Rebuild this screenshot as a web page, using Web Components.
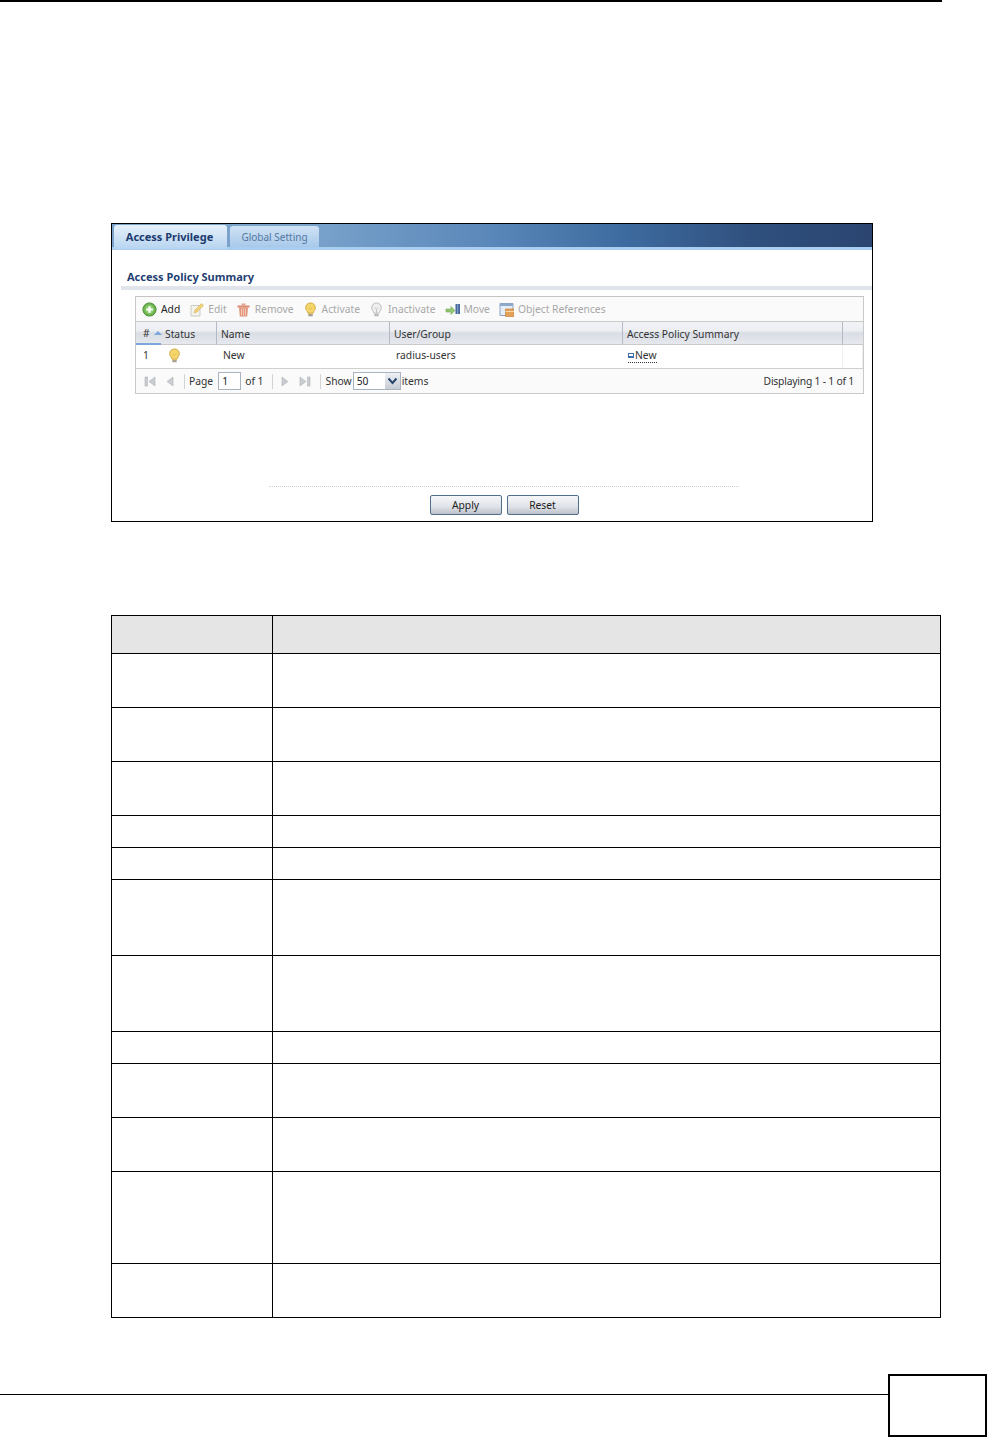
<!DOCTYPE html>
<html>
<head>
<meta charset="utf-8">
<title>Access Privilege</title>
<style>
    html, body { margin: 0; padding: 0; background: #fff; }
</style>
</head>
<body>
<zy-page>
    <zy-window>
        <zy-toolbar>
            <zy-tool icon="add" label="Add" active></zy-tool>
            <zy-tool icon="edit" label="Edit"></zy-tool>
            <zy-tool icon="remove" label="Remove"></zy-tool>
            <zy-tool icon="bulb" label="Activate"></zy-tool>
            <zy-tool icon="bulb-off" label="Inactivate"></zy-tool>
            <zy-tool icon="move" label="Move"></zy-tool>
            <zy-tool icon="refs" label="Object References"></zy-tool>
        </zy-toolbar>
        <zy-summary></zy-summary>
        <zy-pager></zy-pager>
    </zy-window>
    <zy-doc-table rows="54 54 54 32 32 76 76 32 54 54 92 54"></zy-doc-table>
</zy-page>

<script>
const ICONS = {
    add: `<circle cx="7.5" cy="7.5" r="6.6" fill="#6fb650" stroke="#4b8f3c"/><circle cx="7.5" cy="7.5" r="4.2" fill="#8fcf74"/><path d="M7.5 4.2v6.6M4.2 7.5h6.6" stroke="#fff" stroke-width="2.2"/>`,
    edit: `<path d="M2 3.5h9v10.5H2z" fill="#f4f4ee" stroke="#c9c9c2"/><path d="M5 11l1-3 6.5-6.5 2 2L8 10z" fill="#efd27a" stroke="#d8b868" stroke-width=".7"/>`,
    remove: `<path d="M1.5 3.5h12v2h-12z" fill="#d9876c"/><path d="M5.5 1.5h4v2h-4z" fill="#e0a48f"/><path d="M3 5.5h9l-.8 9H3.8z" fill="#e2947a"/><path d="M5.5 6.5v7M7.5 6.5v7M9.5 6.5v7" stroke="#f4c9b8"/>`,
    bulb: `<path d="M7.5 1C4.7 1 2.7 3 2.7 5.6c0 2.4 1.8 3.4 2.3 5.6h5c.5-2.2 2.3-3.2 2.3-5.6C12.3 3 10.3 1 7.5 1z" fill="#f5d66c" stroke="#d2a93f"/><path d="M5.8 5.500l1.700 2 1.700-2" fill="none" stroke="#e6b94e"/><path d="M5.300 12h4.400v2.300H5.300z" fill="#a8a28c"/>`,
    'bulb-off': `<path d="M7.500 1C4.700 1 2.700 3 2.700 5.600c0 2.400 1.800 3.400 2.300 5.600h5c.5-2.200 2.300-3.200 2.300-5.600C12.300 3 10.300 1 7.500 1z" fill="#efefef" stroke="#bdbdbd"/><path d="M5.800 5.500l1.700 2 1.700-2M7.500 7.500v3.500" fill="none" stroke="#c4c4c4"/><path d="M5.300 12h4.400v2.300H5.300z" fill="#bcbcbc"/>`,
    move: `<path d="M1 7h5V4.500L10 8.500l-4 4V10H1z" fill="#92c66f" stroke="#74a858" stroke-width=".6"/><path d="M10.500 2h4.500v10h-4.500z" fill="#44679c"/><path d="M12.700 2v10" stroke="#8ba8cf"/>`,
    refs: `<path d="M1 1.500h13v12H1z" fill="#e6edf6" stroke="#8ea4c4"/><path d="M1 1.500h13v2.500H1z" fill="#8ea8cc"/><path d="M6.500 7h8.500v7.500H6.500z" fill="#e4a15a" stroke="#c4823e" stroke-width=".7"/><path d="M6.500 9.500h8.500" stroke="#f6d6ae"/>`
};

class ZyPage extends HTMLElement {
    connectedCallback() {
        this.attachShadow({ mode: 'open' }).innerHTML = `
            <style>
                :host {
                    display: block;
                    width: 987px;
                    height: 1438px;
                    overflow: hidden;
                    font-family: "Noto Sans", sans-serif;
                }
                .top-rule { height: 2px; width: 942px; background: #000; }
                .content { padding: 221px 0 0 111px; }
                .footer { display: flex; align-items: flex-start; margin-top: 56px; }
                .footer-rule { width: 888px; height: 1px; margin-top: 20px; background: #000; }
                .page-box {
                    width: 95px;
                    height: 59px;
                    border: 2px solid #000;
                    background: #fff;
                }
            </style>
            <div class="top-rule"></div>
            <div class="content"><slot></slot></div>
            <div class="footer">
                <div class="footer-rule"></div>
                <div class="page-box"></div>
            </div>
        `;
    }
}

class ZyWindow extends HTMLElement {
    connectedCallback() {
        this.attachShadow({ mode: 'open' }).innerHTML = `
            <style>
                :host {
                    display: block;
                    box-sizing: border-box;
                    width: 762px;
                    height: 299px;
                    border: 1px solid #000;
                    background: #fff;
                    font-size: 10.3px;
                    color: #333;
                }
                .tabbar {
                    display: flex;
                    align-items: flex-end;
                    gap: 3px;
                    box-sizing: border-box;
                    height: 26px;
                    padding-left: 2px;
                    background: linear-gradient(90deg, #7ba3cc 0, #7ba3cc 25%, #5a87b9 50%, #3d6a9e 68%, #2f4f7d 85%, #2b4570 100%);
                    border-bottom: 3px solid #a9cdee;
                }
                .tab {
                    display: flex;
                    align-items: center;
                    justify-content: center;
                    box-sizing: border-box;
                    border-radius: 3px 3px 0 0;
                }
                .tab.on {
                    width: 113px;
                    height: 24px;
                    margin-bottom: -2px;
                    padding: 0 2px 2px 0;
                    background: linear-gradient(#e6f1fb, #b7d4f0);
                    color: #1c3a6e;
                    font-size: 11px;
                    font-weight: 700;
                }
                .tab.off {
                    width: 89px;
                    height: 21px;
                    background: linear-gradient(#cfe2f5, #a9c9ea);
                    color: #54779f;
                    font-size: 10px;
                }
                h2 {
                    margin: 0;
                    padding: 19px 0 0 15px;
                    height: 16px;
                    font-size: 11px;
                    line-height: 16px;
                    font-weight: 700;
                    color: #1f3f73;
                }
                .heading-bar { height: 4px; margin: 1px 0 0 9px; background: #e2e4ec; }
                .panel {
                    box-sizing: border-box;
                    width: 729px;
                    height: 98px;
                    margin: 6px 0 0 23px;
                    border: 1px solid #c9c9c9;
                    border-top-color: #c4c4c4;
                }
                .actions {
                    display: flex;
                    flex-direction: column;
                    align-items: center;
                    margin: 92px 0 0 24px;
                }
                .divider { width: 470px; border-top: 1px dotted #cfcfcf; }
                .buttons { display: flex; gap: 5px; margin-top: 8px; }
                button {
                    box-sizing: border-box;
                    width: 72px;
                    height: 20px;
                    padding: 0;
                    border: 1px solid #4f6f8c;
                    border-radius: 2px;
                    background: linear-gradient(#f6f7f9, #dfe2e8 60%, #bcc1c9);
                    font: inherit;
                    color: #222;
                }
            </style>
            <div class="tabbar">
                <div class="tab on">Access Privilege</div>
                <div class="tab off">Global Setting</div>
            </div>
            <h2>Access Policy Summary</h2>
            <div class="heading-bar"></div>
            <div class="panel"><slot></slot></div>
            <div class="actions">
                <div class="divider"></div>
                <div class="buttons">
                    <button>Apply</button>
                    <button>Reset</button>
                </div>
            </div>
        `;
    }
}

class ZyToolbar extends HTMLElement {
    connectedCallback() {
        this.attachShadow({ mode: 'open' }).innerHTML = `
            <style>
                :host {
                    display: flex;
                    align-items: center;
                    gap: 9px;
                    box-sizing: border-box;
                    height: 25px;
                    padding-left: 6px;
                    background: #fafafa;
                    border-bottom: 1px solid #c9c9c9;
                }
            </style>
            <slot></slot>
        `;
    }
}

class ZyTool extends HTMLElement {
    connectedCallback() {
        const name = this.getAttribute('icon');
        this.attachShadow({ mode: 'open' }).innerHTML = `
            <style>
                :host {
                    display: flex;
                    align-items: center;
                    gap: 4px;
                    color: #a8a8a8;
                    white-space: nowrap;
                }
                :host([active]) { color: #222; }
                svg { display: block; }
            </style>
            <svg width="15" height="15" viewBox="0 0 15 15">${ICONS[name]}</svg>
            <span>${this.getAttribute('label')}</span>
        `;
    }
}

class ZySummary extends HTMLElement {
    connectedCallback() {
        const cols = '25px 56px 173px 233px 220px 1fr';
        this.attachShadow({ mode: 'open' }).innerHTML = `
            <style>
                :host { display: block; }
                .head, .row { display: grid; grid-template-columns: ${cols}; box-sizing: border-box; }
                .head {
                    height: 23px;
                    background: linear-gradient(#f2f3f6 0, #eceef2 40%, #d9dde4 50%, #e6e8ed 100%);
                    border-bottom: 1px solid #c9c9c9;
                }
                .head div {
                    display: flex;
                    align-items: center;
                    gap: 4px;
                    padding: 1px 0 0 4px;
                    border-right: 1px solid #b4bbc6;
                    color: #333;
                }
                .head div:first-child {
                    padding-left: 7px;
                    border-right: 0;
                    border-bottom: 2px solid #7da7dc;
                    margin-bottom: -1px;
                }
                .head div:last-child { border-right: 0; }
                .sort {
                    width: 0;
                    height: 0;
                    border: 4px solid transparent;
                    border-top: 0;
                    border-bottom: 4px solid #7da7dc;
                }
                .row {
                    border-bottom: 1px solid #d0d0d0;
                    height: 24px;
                    background: #fff;
                }
                .row div {
                    display: flex;
                    align-items: center;
                    padding: 0 0 3px 5px;
                    border-right: 1px solid #eef0f3;
                    color: #333;
                }
                .row div:first-child { padding-left: 7px; border-right: 0; }
                .row div:nth-child(2) { padding-left: 6px; border-right: 0; }
                .row div:nth-child(3) { padding-left: 6px; border-right: 0; }
                .row div:nth-child(4) { border-right: 0; padding-left: 6px; }
                .link { display: flex; align-items: center; gap: 1px; border-bottom: 1px dotted #334; line-height: 13px; margin-top: 2px; }
                .link i { display: block; width: 4px; height: 2px; border: 1px solid #3f6fae; border-bottom-width: 2px; }
            </style>
            <div class="head">
                <div>#<span class="sort"></span></div>
                <div>Status</div>
                <div>Name</div>
                <div>User/Group</div>
                <div>Access Policy Summary</div>
                <div></div>
            </div>
            <div class="row">
                <div>1</div>
                <div><svg width="15" height="15" viewBox="0 0 15 15">${ICONS.bulb}</svg></div>
                <div>New</div>
                <div>radius-users</div>
                <div><span class="link"><i></i>New</span></div>
                <div></div>
            </div>
        `;
    }
}

class ZyPager extends HTMLElement {
    connectedCallback() {
        const arrow = (d) => `<svg width="13" height="13" viewBox="0 0 13 13"><path d="${d}" fill="#c9cdd2" stroke="#b0b4ba" stroke-width=".6"/></svg>`;
        this.attachShadow({ mode: 'open' }).innerHTML = `
            <style>
                :host {
                    display: flex;
                    align-items: center;
                    box-sizing: border-box;
                    height: 24px;
                    padding: 0 9px 0 8px;
                    background: #fafafa;
                    color: #333;
                }
                svg { display: block; }
                .sep { width: 1px; height: 15px; background: #d4d4d4; }
                .box {
                    box-sizing: border-box;
                    height: 18px;
                    padding-left: 3px;
                    border: 1px solid #a9b4c0;
                    background: #fff;
                    line-height: 16px;
                    color: #222;
                }
                .select { display: flex; width: 48px; padding: 0; }
                .select span { flex: 1; padding-left: 3px; }
                .select i {
                    display: flex;
                    align-items: center;
                    justify-content: center;
                    width: 15px;
                    background: linear-gradient(#eef0f3, #c6ccd4);
                }
                .spacer { flex: 1; }
                .count { letter-spacing: -0.2px; }
            </style>
            ${arrow('M1 2h2.500v9H1zM11 2v9L5 6.500z')}
            <span style="width:7px"></span>
            ${arrow('M9 2v9L3 6.500z')}
            <span style="width:7px"></span>
            <span class="sep"></span>
            <span style="width:4px"></span>
            <span>Page</span>
            <span style="width:5px"></span>
            <span class="box" style="width:23px">1</span>
            <span style="width:4px"></span>
            <span>of 1</span>
            <span style="width:8px"></span>
            <span class="sep"></span>
            <span style="width:5px"></span>
            ${arrow('M4 2v9l6-4.500z')}
            <span style="width:7px"></span>
            ${arrow('M2 2v9l6-4.500zM9.500 2H12v9H9.500z')}
            <span style="width:9px"></span>
            <span class="sep"></span>
            <span style="width:5px"></span>
            <span>Show</span>
            <span style="width:1px"></span>
            <span class="box select"><span>50</span><i><svg width="11" height="8" viewBox="0 0 11 8"><path d="M1.500 1.500L5.500 6l4-4.500" fill="none" stroke="#27456e" stroke-width="2"/></svg></i></span>
            <span style="width:1px"></span>
            <span>items</span>
            <span class="spacer"></span>
            <span class="count">Displaying 1 - 1 of 1</span>
        `;
    }
}

class ZyDocTable extends HTMLElement {
    connectedCallback() {
        const heights = this.getAttribute('rows').split(' ');
        const rows = heights.map(h => `<div class="cell" style="height:${h - 1}px"></div><div class="cell" style="height:${h - 1}px"></div>`).join('');
        this.attachShadow({ mode: 'open' }).innerHTML = `
            <style>
                :host {
                    display: block;
                    width: 830px;
                    margin-top: 93px;
                    box-sizing: border-box;
                    border-top: 1px solid #000;
                    border-left: 1px solid #000;
                }
                .grid { display: grid; grid-template-columns: 161px 1fr; }
                .cell {
                    border-right: 1px solid #000;
                    border-bottom: 1px solid #000;
                }
                .cell.head { background: #e5e5e5; }
            </style>
            <div class="grid">
                <div class="cell head" style="height:37px"></div>
                <div class="cell head" style="height:37px"></div>
                ${rows}
            </div>
        `;
    }
}

customElements.define('zy-page', ZyPage);
customElements.define('zy-window', ZyWindow);
customElements.define('zy-toolbar', ZyToolbar);
customElements.define('zy-tool', ZyTool);
customElements.define('zy-summary', ZySummary);
customElements.define('zy-pager', ZyPager);
customElements.define('zy-doc-table', ZyDocTable);
</script>
</body>
</html>
